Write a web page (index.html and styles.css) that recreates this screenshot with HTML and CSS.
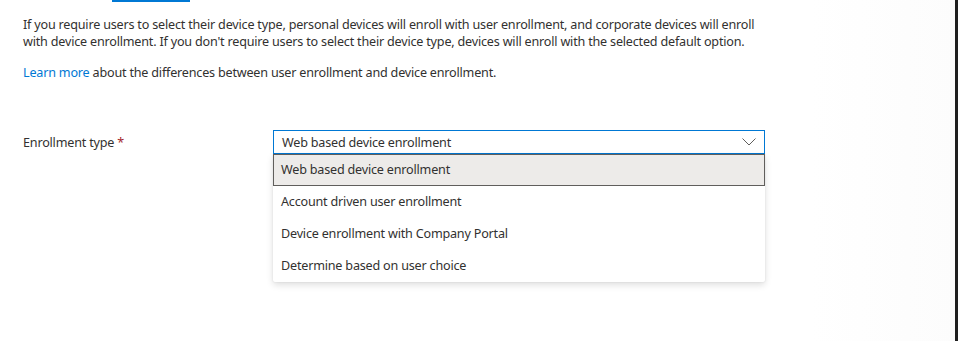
FILE: index.html
```html
<!DOCTYPE html>
<html lang="en">
<head>
  <meta charset="UTF-8" />
  <meta name="viewport" content="width=device-width, initial-scale=1.0"/>
  <title>Enrollment type</title>
  <link rel="stylesheet" href="styles.css">
</head>
<body>
  <div class="pane">
    <div class="tab-indicator"></div>

    <div class="content">
      <p class="desc">
        If you require users to select their device type, personal devices will enroll with user enrollment, and corporate devices will enroll<br>
        with device enrollment. If you don't require users to select their device type, devices will enroll with the selected default option.
      </p>
      <p class="desc">
        <a href="#" class="link">Learn more</a> about the differences between user enrollment and device enrollment.
      </p>

      <div class="field">
        <label class="field-label">Enrollment type <span class="req">*</span></label>
        <div class="dropdown">
          <div class="dropdown-box">
            <span>Web based device enrollment</span>
            <svg class="chevron" width="14" height="8" viewBox="0 0 14 8">
              <path d="M0.5 0.5 L7 7 L13.5 0.5" fill="none" stroke="#605e5c" stroke-width="1"/>
            </svg>
          </div>
          <ul class="dropdown-list">
            <li class="option selected">Web based device enrollment</li>
            <li class="option">Account driven user enrollment</li>
            <li class="option">Device enrollment with Company Portal</li>
            <li class="option">Determine based on user choice</li>
          </ul>
        </div>
      </div>
    </div>
  </div>
</body>
</html>
```

FILE: styles.css
```css
body {
  margin: 0;
  background: #fff;
  font-family: "Noto Sans", "Open Sans", sans-serif;
  font-size: 12.6px;
  letter-spacing: -0.2px;
  color: #323130;
}
.pane {
  height: 341px;
  width: 955px;
  border-right: 3px solid #1f1f1f;
  background: linear-gradient(to right, #fff 85%, #fcfcfc);
}
.tab-indicator {
  margin-left: 112px;
  width: 78px;
  height: 2px;
  background: #0078d4;
}
.content {
  padding-left: 23px;
}
.desc {
  margin: 14px 0 0;
  line-height: 17px;
  white-space: nowrap;
}
.desc + .desc {
  margin-top: 14px;
}
.link {
  color: #0078d4;
  text-decoration: none;
}
.field {
  display: flex;
  margin-top: 49px;
}
.field-label {
  width: 250px;
  padding-top: 4px;
}
.req {
  color: #a4262c;
}
.dropdown {
  position: relative;
  width: 492px;
}
.dropdown-box {
  height: 22px;
  border: 1px solid #0078d4;
  display: flex;
  align-items: center;
  justify-content: space-between;
  padding: 0 8px 0 8px;
}
.dropdown-list {
  position: absolute;
  top: 24px;
  left: 0;
  right: 0;
  margin: 0;
  padding: 0;
  list-style: none;
  background: #fff;
  box-shadow: 0 3px 7px rgba(0,0,0,0.13), 0 0 2px rgba(0,0,0,0.1);
  border-radius: 0 0 2px 2px;
}
.option {
  height: 32px;
  line-height: 32px;
  padding-left: 8px;
}
.option.selected {
  background: #edebe9;
  border: 1px solid #605e5c;
  height: 30px;
  line-height: 30px;
  padding-left: 7px;
}
```
